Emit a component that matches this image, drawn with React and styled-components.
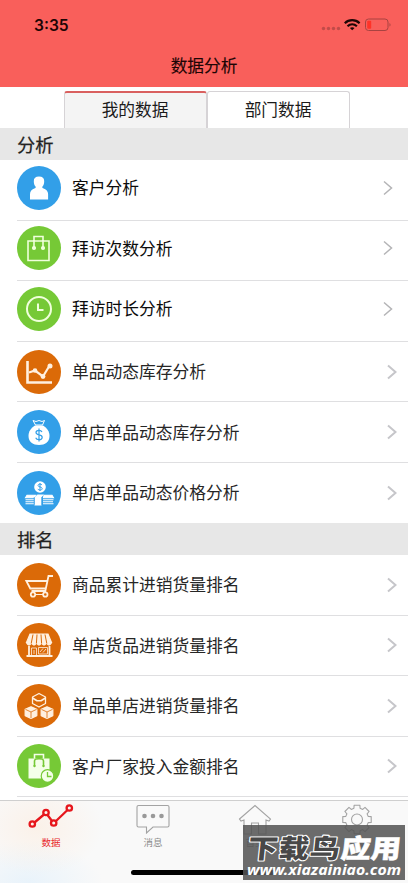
import React, { useState } from 'react';
import styled, { createGlobalStyle } from 'styled-components';

const GlobalStyle = createGlobalStyle`
  * {
    box-sizing: border-box;
  }

  body {
    margin: 0;
    background: #fff;
    font-family: "Liberation Sans", "Noto Sans CJK SC", sans-serif;
  }

  button {
    font-family: inherit;
    border: none;
    background: none;
    padding: 0;
  }
`;

const Screen = styled.div`
  position: relative;
  display: flex;
  flex-direction: column;
  width: 408px;
  height: 883px;
  overflow: hidden;
  background: #fff;
`;

const Header = styled.header`
  flex: none;
  height: 87px;
  background: #f95f5b;
  color: #1d0505;
`;

const StatusBar = styled.div`
  display: flex;
  justify-content: space-between;
  align-items: center;
  height: 50px;
  padding: 0 16px 0 34px;
`;

const Time = styled.span`
  font-family: Inter, sans-serif;
  font-size: 15.6px;
  font-weight: 600;
`;

const StatusIcons = styled.svg`
  display: block;
  width: 72px;
  height: 16px;
`;

const Title = styled.h1`
  margin: 0;
  padding-top: 2px;
  font-size: 16.7px;
  font-weight: 400;
  line-height: 30px;
  text-align: center;
  -webkit-text-stroke: 0.15px currentColor;
`;

const Tabs = styled.div`
  flex: none;
  display: flex;
  justify-content: center;
  height: 41px;
  padding: 4px 0 0 5px;
`;

const Tab = styled.button`
  width: 143px;
  padding-top: ${({ $active }) => ($active ? 1 : 2)}px;
  font-size: 16.7px;
  line-height: 24px;
  color: #1a1a1a;
  background: ${({ $active }) => ($active ? '#f4f4f4' : '#fff')};
  border: 1px solid #d6d3d6;
  border-top: ${({ $active }) => ($active ? '2px solid #d9605f' : '1px solid #d6d3d6')};
  border-bottom: none;
  border-radius: 3px 3px 0 0;
`;

const SectionTitle = styled.h2`
  flex: none;
  height: ${({ $height }) => $height}px;
  margin: 0;
  padding: 2px 17px 0;
  font-size: 18.3px;
  font-weight: 400;
  line-height: 31px;
  color: #222;
  background: #e7e7e7;
  -webkit-text-stroke: 0.25px currentColor;
`;

const List = styled.ul`
  flex: none;
  list-style: none;
  margin: 0;
  padding: 0 0 0 17px;
`;

const Row = styled.li`
  display: flex;
  align-items: center;
  height: 60.5px;
  padding: ${({ $raised }) => ($raised ? '0 15px 5px 0' : '0 11px 0 0')};
  border-bottom: 1px solid ${({ $last }) => ($last ? 'transparent' : '#dfdfe1')};
`;

const RowIcon = styled.svg`
  flex: none;
  width: 44px;
  height: 44px;
  border-radius: 50%;
  background: ${({ $color }) => $color};
  fill: none;
  stroke: #fff;
  stroke-width: 1.6;
`;

const RowLabel = styled.span`
  flex: 1;
  margin-left: 11px;
  padding-top: 3px;
  font-size: 16.75px;
  line-height: 24px;
  color: ${({ $raised }) => ($raised ? '#0c0c0c' : '#262626')};
`;

const Chevron = styled.svg`
  width: 10px;
  height: 16px;
  fill: none;
  stroke: ${({ $raised }) => ($raised ? '#b4b4b6' : '#c6c6ca')};
  stroke-width: ${({ $raised }) => ($raised ? 1.5 : 2)};
`;

const BottomBar = styled.nav`
  position: absolute;
  left: 0;
  right: 0;
  bottom: 0;
  height: 83px;
  display: grid;
  grid-template-columns: repeat(4, 1fr);
  border-top: 1px solid #cfcfcf;
  background:
    radial-gradient(ellipse 65px 48px at 38px 26px, rgba(253, 230, 210, 0.42), transparent),
    radial-gradient(ellipse 75px 42px at 28px 82px, rgba(222, 239, 252, 0.6), transparent),
    #f9f9f9;
`;

const BottomItem = styled.button`
  display: flex;
  flex-direction: column;
  align-items: center;
  font-size: 9.5px;
  line-height: 16px;
  color: ${({ $active }) => ($active ? '#e8282d' : '#8c8c8c')};

  svg {
    width: 48px;
    height: 34px;
    fill: none;
    stroke: ${({ $active }) => ($active ? '#e6161c' : '#a3a3a3')};
    stroke-width: ${({ $active }) => ($active ? 2.3 : 1.1)};
  }
`;

const HomeIndicator = styled.div`
  position: absolute;
  left: 131px;
  bottom: 8px;
  width: 146px;
  height: 5px;
  border-radius: 3px;
  background: #000;
`;

const Watermark = styled.div`
  position: absolute;
  left: 243px;
  top: 825px;
  width: 162px;
  height: 55px;
  background: rgba(84, 84, 84, 0.86);
  color: #fff;
`;

const WatermarkText = styled.svg`
  display: block;
  width: 162px;
  height: 55px;
  fill: #fff;
`;

const BLUE = '#329fe8';
const GREEN = '#76c936';
const ORANGE = '#db6a08';

const icons = {
  person: (
    <path
      d="M16.800 15c0-3 1.700-4.600 5.200-4.600s5.200 1.600 5.200 4.600c0 2.400-.5 4.200-1.700 5.400-.5.7-.2 1.500.6 1.800 3.200 1.100 5 3 5 6v5.300H13v-5.300c0-3 1.700-4.900 4.900-6 .8-.3 1.100-1.100.6-1.800-1.200-1.200-1.700-3-1.700-5.400z"
      fill="#fff"
      stroke="none"
    />
  ),
  bag: (
    <g stroke="#f0ffdc">
      <path d="M11 15h21v19.500H11zM17 15v-4.500h9V15" />
      <path d="M17 14v7M26 14v7" />
      <circle cx="17" cy="22" r="1.300" fill="#f0ffdc" />
      <circle cx="26" cy="22" r="1.300" fill="#f0ffdc" />
    </g>
  ),
  clock: (
    <g stroke="#f0ffdc" strokeWidth="2">
      <circle cx="22" cy="22" r="12" />
      <path d="M21 16.500V23h5.500" />
    </g>
  ),
  chart: (
    <g stroke="#fff0df">
      <path d="M10.500 11v21.500H35" strokeWidth="2.600" />
      <path d="M12 22.500l6-2 8 6 6-10" strokeWidth="2.200" />
      <g fill="#fff0df" stroke="none">
        <circle cx="18" cy="20.500" r="2.300" />
        <circle cx="26" cy="26.500" r="2.400" />
        <circle cx="33" cy="16" r="2.500" />
      </g>
    </g>
  ),
  moneyBag: (
    <>
      <path d="M16 10.500l3 1 3-1 3 1 2.500-1-2 4.500h-7z" strokeWidth="1" />
      <path d="M18 15.500h8c4 2.500 6.500 6 6.500 10.500 0 6-4.500 9-10.500 9s-10.500-3-10.500-9c0-4.500 2.500-8 6.500-10.500z" fill="#fff" stroke="none" />
      <path d="M25 22c-.6-1.200-1.700-1.600-3-1.600-1.700 0-3 .7-3 2.200 0 3.300 6.200 1.300 6.200 4.600 0 1.600-1.400 2.500-3.200 2.500-1.600 0-2.800-.7-3.300-2M22 18.500v13" stroke={BLUE} strokeWidth="1.200" />
    </>
  ),
  cash: (
    <>
      <circle cx="23" cy="16" r="5.800" fill="#fff" stroke="none" />
      <path d="M25 14c-.5-.7-1.100-.9-2-.9-1.200 0-2 .5-2 1.300 0 2.100 4.200 1 4.200 3.200 0 1-1 1.500-2.200 1.500-1 0-1.900-.4-2.200-1.200M23 12v8" stroke={BLUE} strokeWidth="1" />
      <path d="M10 24.200h8.500l-2 2.600H8.500zM8.500 28.800h8.500M8.500 30.800h8.500M8.500 32.800h8.500M27 24.200h8l1.500 2.600h-10zM26 28.800h10.500M26 30.800h10M26 32.800h10.500" fill="#fff" strokeWidth="1.100" />
      <path d="M17.500 26.200l3-2.700h6.500l-2.500 2.700v8.300h-7z" fill="#fff" stroke="none" />
      <path d="M25 26v8M17.200 26.200v7.500" stroke={BLUE} strokeWidth=".8" />
    </>
  ),
  cart: (
    <g stroke="#fff0df" strokeWidth="1.800">
      <path d="M36 13h-4.500l-3.200 15H14.500" />
      <path d="M30.500 18H9.300l4 7.500h15.500" />
      <circle cx="16" cy="31.500" r="2.200" />
      <circle cx="28.300" cy="31.500" r="2.200" />
      <path d="M18 31.500h8" strokeWidth="1" />
    </g>
  ),
  store: (
    <g stroke="#fff0df" strokeWidth="1.200">
      <path d="M13 11h18l3.500 8.500h-25z" fill="#fff0df" />
      <path d="M9.500 19.500c0 3.500 5 3.500 5 0 0 3.500 5 3.500 5 0 0 3.500 5 3.500 5 0 0 3.500 5 3.500 5 0 0 3.500 5 3.500 5 0z" fill="#fff0df" strokeWidth=".8" />
      <path d="M16 11.500l-1.800 9M20 11.500l-.6 9M24 11.500l.6 9M28 11.500l1.800 9" stroke={ORANGE} strokeWidth="1" />
      <path d="M12 23v10M32.500 23v10M9.500 33h26" strokeWidth="1.800" />
      <path d="M14.500 25h5v8h-5zM21.500 24.500h9V31h-9zM23 29l3-3.500M26 29.500l3-3.500M17 27v4" strokeWidth=".8" />
    </g>
  ),
  boxes: (
    <g stroke="#fff0df" strokeWidth="1.300" strokeLinejoin="round">
      <path d="M22 9.500l6.500 3.500v6.500L22 23l-6.500-3.500V13z" />
      <path d="M15.500 14l4.500 2.800h4l4.500-2.800" strokeWidth="1.600" />
      <path d="M14 22.800l5.800 2.600v6.200L14 34.400l-5.800-2.800v-6.200z" fill="#fff0df" />
      <path d="M8.500 25.400l5.500 2.600 5.500-2.600M14 28v6.200" stroke={ORANGE} strokeWidth=".8" />
      <path d="M30 22.800l5.800 2.600v6.200L30 34.400l-5.800-2.800v-6.200z" fill="#fff0df" />
      <path d="M24.500 25.400l5.500 2.600 5.500-2.600M30 28v6.200" stroke={ORANGE} strokeWidth=".8" />
    </g>
  ),
  bagClock: (
    <>
      <path d="M11.500 14.500h21v20h-21z" fill="#f4ffe8" stroke="none" />
      <path d="M17.500 14.500v-4h9v4" stroke="#f4ffe8" />
      <path d="M17.500 22v-5c0-3 9-3 9 0v5" stroke={GREEN} />
      <circle cx="17.500" cy="22" r="1.200" fill={GREEN} stroke="none" />
      <circle cx="26.500" cy="22" r="1.200" fill={GREEN} stroke="none" />
      <circle cx="30.500" cy="32" r="6.300" fill="#f4ffe8" stroke={GREEN} strokeWidth="1.200" />
      <path d="M30.500 28v4.500h4" stroke={GREEN} strokeWidth="1.300" />
    </>
  ),
};

const analysisRows = [
  { label: '客户分析', icon: 'person', color: BLUE, raised: true },
  { label: '拜访次数分析', icon: 'bag', color: GREEN, raised: true },
  { label: '拜访时长分析', icon: 'clock', color: GREEN, raised: true },
  { label: '单品动态库存分析', icon: 'chart', color: ORANGE },
  { label: '单店单品动态库存分析', icon: 'moneyBag', color: BLUE },
  { label: '单店单品动态价格分析', icon: 'cash', color: BLUE, last: true },
];

const rankingRows = [
  { label: '商品累计进销货量排名', icon: 'cart', color: ORANGE },
  { label: '单店货品进销货量排名', icon: 'store', color: ORANGE },
  { label: '单品单店进销货量排名', icon: 'boxes', color: ORANGE },
  { label: '客户厂家投入金额排名', icon: 'bagClock', color: GREEN },
];

// outline of an eight-toothed gear around (cx, cy)
const gearPath = (cx, cy, outer, inner) => {
  const points = [];
  for (let i = 0; i < 8; i++) {
    const middle = (i * Math.PI) / 4;
    [[-0.27, inner], [-0.2, outer], [0.2, outer], [0.27, inner]].forEach(([offset, r]) => {
      const x = cx + r * Math.sin(middle + offset);
      const y = cy - r * Math.cos(middle + offset);
      points.push(`${x.toFixed(2)} ${y.toFixed(2)}`);
    });
  }
  return `M${points.join('L')}z`;
};

const bottomItems = [
  {
    label: '数据',
    icon: (
      <>
        <path d="M7.500 21.500l9.500-8M20.500 14l4.500 6M29 20l11.500-11" />
        <circle cx="5.300" cy="23" r="2.700" />
        <circle cx="19" cy="11.500" r="2.700" />
        <circle cx="26.700" cy="22" r="2.700" />
        <circle cx="42.300" cy="7" r="2.700" />
      </>
    ),
  },
  {
    label: '消息',
    icon: (
      <>
        <path d="M9.500 4.500h29a1.500 1.500 0 0 1 1.500 1.500v18.500a1.500 1.500 0 0 1-1.500 1.500H24l-6.500 6V26h-8A1.500 1.500 0 0 1 8 24.500V6a1.500 1.500 0 0 1 1.500-1.500z" />
        <g fill="#999" stroke="none">
          <circle cx="15.500" cy="15" r="2.300" />
          <circle cx="24" cy="15" r="2.300" />
          <circle cx="32.500" cy="15" r="2.300" />
        </g>
      </>
    ),
  },
  {
    label: '首页',
    icon: (
      <path d="M8.500 18L24 4.500 39.500 18l-1.500 2-3-1v14h-7.500V22h-7v11H13V19l-3 1z" />
    ),
  },
  {
    label: '设置',
    icon: (
      <>
        <path d={gearPath(24, 18.5, 14.5, 11.6)} strokeLinejoin="round" />
        <circle cx="24" cy="18.500" r="5.500" />
      </>
    ),
  },
];

const ListRow = ({ row }) => (
  <Row $raised={row.raised} $last={row.last}>
    <RowIcon viewBox="0 0 44 44" $color={row.color}>
      {icons[row.icon]}
    </RowIcon>
    <RowLabel $raised={row.raised}>{row.label}</RowLabel>
    <Chevron viewBox="0 0 10 16" $raised={row.raised}>
      <path d="M1 1.500l7.500 6.500L1 14.500" />
    </Chevron>
  </Row>
);

const App = () => {
  const [activeTab, setActiveTab] = useState('我的数据');

  return (
    <>
      <GlobalStyle />
      <Screen>
        <Header>
          <StatusBar>
            <Time>3:35</Time>
            <StatusIcons viewBox="0 0 72 16">
              <g fill="#c14b49">
                <circle cx="3.500" cy="11.500" r="1.700" />
                <circle cx="8.500" cy="11.500" r="1.700" />
                <circle cx="13.500" cy="11.500" r="1.700" />
                <circle cx="18.500" cy="11.500" r="1.700" />
              </g>
              <g fill="none" stroke="#1d0505" strokeWidth="2.200">
                <path d="M24.800 6.200c4.200-4 10.600-4 14.800 0M27.500 9.200c2.800-2.500 6.600-2.500 9.400 0" />
              </g>
              <path d="M32.200 13.300l-2.300-2.200c1.300-1.200 3.300-1.200 4.600 0z" fill="#1d0505" />
              <rect x="45.500" y="2" width="22.500" height="11.500" rx="3" fill="none" stroke="#a84341" />
              <rect x="47.200" y="3.800" width="4" height="8" rx="1" fill="#ff3328" />
              <path d="M69.500 6v3.600c1.400-.5 1.400-3.100 0-3.600z" fill="#a84341" />
            </StatusIcons>
          </StatusBar>
          <Title>数据分析</Title>
        </Header>

        <Tabs>
          {['我的数据', '部门数据'].map((tab) => (
            <Tab key={tab} $active={tab === activeTab} onClick={() => setActiveTab(tab)}>
              {tab}
            </Tab>
          ))}
        </Tabs>

        <SectionTitle $height={32.4}>分析</SectionTitle>
        <List>
          {analysisRows.map((row) => (
            <ListRow key={row.label} row={row} />
          ))}
        </List>

        <SectionTitle $height={31.7}>排名</SectionTitle>
        <List>
          {rankingRows.map((row) => (
            <ListRow key={row.label} row={row} />
          ))}
        </List>

        <BottomBar>
          {bottomItems.map((item, index) => (
            <BottomItem key={item.label} $active={index === 0}>
              <svg viewBox="0 0 48 34">{item.icon}</svg>
              {item.label}
            </BottomItem>
          ))}
        </BottomBar>
        <HomeIndicator />

        <Watermark>
          <WatermarkText viewBox="0 0 162 55">
            <g
              transform="translate(4 32.500) skewX(-6) scale(1 0.87)"
              fontFamily="'Noto Sans CJK SC', sans-serif"
              fontSize="30"
              fontWeight="900"
            >
              <text
                x="0"
                y="0"
                textLength="92"
                fill="#484848"
                stroke="#fff"
                strokeWidth="2.400"
                strokeLinejoin="round"
                paintOrder="stroke"
              >
                下载鸟
              </text>
              <text x="93" y="0" textLength="60" stroke="#fff" strokeWidth=".6">
                应用
              </text>
            </g>
            <text
              x="4"
              y="50"
              textLength="154"
              lengthAdjust="spacingAndGlyphs"
              fontFamily="'Noto Sans', sans-serif"
              fontSize="14.500"
              fontWeight="700"
              fontStyle="italic"
            >
              www.xiazainiao.com
            </text>
          </WatermarkText>
        </Watermark>
      </Screen>
    </>
  );
};

export default App;
